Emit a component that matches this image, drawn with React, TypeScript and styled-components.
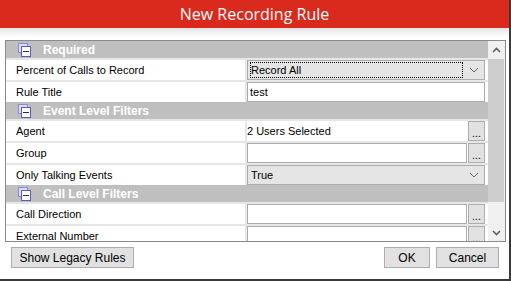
import React from "react";
import styled, { createGlobalStyle } from "styled-components";

const Global = createGlobalStyle`
  html, body { margin: 0; padding: 0; background: #ffffff; }
  body { font-family: "Liberation Sans", Arial, sans-serif; }
`;

const Frame = styled.div`
  width: 511px;
  height: 281px;
  box-sizing: border-box;
  border-right: 2px solid #3a3a3a;
  border-bottom: 2px solid #3a3a3a;
  background: #ffffff;
  display: flex;
  flex-direction: column;
  overflow: hidden;
`;

const TitleBar = styled.div`
  height: 28px;
  flex: none;
  background: #da2a1e;
  color: #ffffff;
  display: flex;
  align-items: center;
  justify-content: center;
  font-family: "Open Sans", "Noto Sans", sans-serif;
  font-size: 16px;
`;

const Shade = styled.div`
  height: 12px;
  flex: none;
  background: linear-gradient(#e4e4e4, #ffffff 75%);
`;

const Grid = styled.div`
  margin-left: 5px;
  width: 501px;
  height: 202px;
  flex: none;
  box-sizing: border-box;
  border: 1px solid #8a8a8a;
  display: flex;
  overflow: hidden;
`;

const Rows = styled.div`
  flex: 1;
  display: flex;
  flex-direction: column;
  overflow: hidden;
`;

const SectionHeader = styled.div`
  height: 17px;
  flex: none;
  background: #bfbfbf;
  display: flex;
  align-items: center;
  padding-left: 12px;
  gap: 12px;
  color: #ffffff;
  font-weight: bold;
  font-size: 12px;
`;

const Row = styled.div`
  height: 22px;
  flex: none;
  box-sizing: border-box;
  border-top: 2px solid #e6e6e6;
  display: flex;
`;

const Label = styled.div`
  width: 241px;
  flex: none;
  box-sizing: border-box;
  border-right: 2px solid #e6e6e6;
  padding-left: 10px;
  display: flex;
  align-items: center;
  font-size: 11px;
  color: #000000;
  white-space: nowrap;
`;

const Value = styled.div`
  flex: 1;
  display: flex;
  align-items: center;
  gap: 1px;
  padding-right: 3px;
  font-size: 11px;
  color: #000000;
  white-space: nowrap;
`;

const TextBox = styled.div`
  flex: 1;
  align-self: stretch;
  box-sizing: border-box;
  border: 1px solid #acacac;
  background: #ffffff;
  padding-left: 2px;
  display: flex;
  align-items: center;
`;

const Combo = styled.div<{ $focused?: boolean }>`
  flex: 1;
  align-self: stretch;
  box-sizing: border-box;
  border: 1px solid #acacac;
  background: #e5e5e5;
  padding: 1px 4px 1px 2px;
  display: flex;
  align-items: stretch;
  gap: 6px;
`;

const ComboText = styled.div<{ $focused?: boolean }>`
  flex: 1;
  display: flex;
  align-items: center;
  box-sizing: border-box;
  border: 1px dotted ${(p) => (p.$focused ? "#000000" : "transparent")};
  padding-left: 0;
`;

const Chevron = styled.svg`
  align-self: center;
  width: 10px;
  height: 6px;
  margin-right: 1px;
`;

const EllipsisButton = styled.div`
  width: 17px;
  flex: none;
  align-self: stretch;
  box-sizing: border-box;
  border: 1px solid #adadad;
  background: #e1e1e1;
  display: flex;
  align-items: flex-end;
  justify-content: center;
  font-size: 11px;
  line-height: 11px;
  padding-bottom: 1px;
  letter-spacing: 0px;
`;

const ScrollBar = styled.div`
  width: 17px;
  flex: none;
  background: #f0f0f0;
  display: flex;
  flex-direction: column;
`;

const ArrowBox = styled.div<{ $bottom?: boolean }>`
  height: 17px;
  flex: none;
  display: flex;
  align-items: center;
  justify-content: center;
  margin-top: ${(p) => (p.$bottom ? "auto" : "0")};
`;

const Thumb = styled.div`
  height: 143px;
  flex: none;
  margin: 1px 1px 0 0;
  background: #cdcdcd;
`;

const Footer = styled.div`
  display: flex;
  gap: 6px;
  padding: 5px 10px 0 11px;
`;

const Button = styled.div<{ $w: number; $push?: boolean }>`
  width: ${(p) => p.$w}px;
  height: 21px;
  box-sizing: border-box;
  border: 1px solid #adadad;
  background: #e1e1e1;
  display: flex;
  align-items: center;
  justify-content: center;
  font-size: 12px;
  color: #000000;
  margin-right: ${(p) => (p.$push ? "auto" : "0")};
`;

const CollapseIcon = () => (
  <svg width="13" height="14" viewBox="0 0 13 14">
    <rect x="0.5" y="0.5" width="9" height="9" fill="#dcdcf4" stroke="#8a8ad8" />
    <rect x="3.5" y="3.5" width="9" height="10" fill="#ffffff" stroke="#5a5ac8" />
    <line x1="5" y1="8.5" x2="11" y2="8.5" stroke="#2a2a4a" />
  </svg>
);

const Down = () => (
  <Chevron viewBox="0 0 10 6">
    <path d="M1 1 L5 5 L9 1" fill="none" stroke="#6a6a6a" strokeWidth="1" />
  </Chevron>
);

const ScrollArrow = ({ up }: { up?: boolean }) => (
  <svg width="9" height="6" viewBox="0 0 9 6">
    <path
      d={up ? "M1 5 L4.5 1.5 L8 5" : "M1 1 L4.5 4.5 L8 1"}
      fill="none"
      stroke="#606060"
      strokeWidth="1.6"
    />
  </svg>
);

const Section = ({ title }: { title: string }) => (
  <SectionHeader>
    <CollapseIcon />
    <span>{title}</span>
  </SectionHeader>
);

export default function App() {
  return (
    <>
      <Global />
      <Frame>
        <TitleBar>New Recording Rule</TitleBar>
        <Shade />
        <Grid>
          <Rows>
            <Section title="Required" />
            <Row>
              <Label>Percent of Calls to Record</Label>
              <Value>
                <Combo>
                  <ComboText $focused>Record All</ComboText>
                  <Down />
                </Combo>
              </Value>
            </Row>
            <Row>
              <Label>Rule Title</Label>
              <Value>
                <TextBox>test</TextBox>
              </Value>
            </Row>
            <Section title="Event Level Filters" />
            <Row>
              <Label>Agent</Label>
              <Value>
                <span style={{ flex: 1 }}>2 Users Selected</span>
                <EllipsisButton>...</EllipsisButton>
              </Value>
            </Row>
            <Row>
              <Label>Group</Label>
              <Value>
                <TextBox />
                <EllipsisButton>...</EllipsisButton>
              </Value>
            </Row>
            <Row>
              <Label>Only Talking Events</Label>
              <Value>
                <Combo>
                  <ComboText>True</ComboText>
                  <Down />
                </Combo>
              </Value>
            </Row>
            <Section title="Call Level Filters" />
            <Row>
              <Label>Call Direction</Label>
              <Value>
                <TextBox />
                <EllipsisButton>...</EllipsisButton>
              </Value>
            </Row>
            <Row>
              <Label>External Number</Label>
              <Value>
                <TextBox />
                <EllipsisButton>...</EllipsisButton>
              </Value>
            </Row>
          </Rows>
          <ScrollBar>
            <ArrowBox>
              <ScrollArrow up />
            </ArrowBox>
            <Thumb />
            <ArrowBox $bottom>
              <ScrollArrow />
            </ArrowBox>
          </ScrollBar>
        </Grid>
        <Footer>
          <Button $w={123} $push>Show Legacy Rules</Button>
          <Button $w={46}>OK</Button>
          <Button $w={63}>Cancel</Button>
        </Footer>
      </Frame>
    </>
  );
}
